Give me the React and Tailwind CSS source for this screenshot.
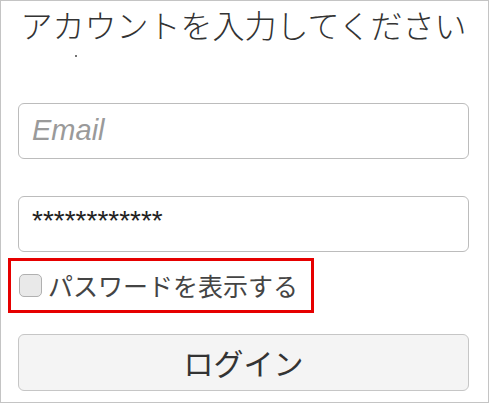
export default function App() {
  return (
    <div className="w-[490px] h-[403px] bg-white">
      <div
        className="w-[489px] h-[403px] border border-[#c4c4c4] pl-[17px] pr-[19px] flex flex-col relative"
        style={{ fontFamily: '"Liberation Sans", "Noto Sans CJK JP", sans-serif' }}
      >
        <h1
          className="text-center text-[32px] leading-[38px] font-light text-[#333] mt-[4px] -mx-[8px] whitespace-nowrap"
          style={{ fontFamily: '"Noto Sans CJK JP", sans-serif' }}
        >
          アカウントを入力してください
        </h1>
        <span className="absolute left-[74px] top-[54px] w-[2px] h-[2px] rounded-full bg-[#444]"></span>
        <div className="mt-[60px] h-[56px] border border-[#bcbcbc] rounded-[6px] flex items-center px-[13px]">
          <input
            className="w-full outline-none bg-transparent text-[29px] italic text-[#333] placeholder:text-[#9a9a9a]"
            style={{ fontFamily: '"Liberation Sans", sans-serif' }}
            placeholder="Email"
          />
        </div>
        <div className="mt-[37px] h-[56px] border border-[#bcbcbc] rounded-[6px] flex items-center px-[13px]">
          <span
            className="text-[28px] text-[#222] leading-none -mt-[6px]"
            style={{ fontFamily: '"Liberation Sans", sans-serif' }}
          >
            ************
          </span>
        </div>
        <label className="mt-[6px] -ml-[10px] w-[306px] h-[55px] border-[3px] border-[#e60000] flex items-center pl-[8px]">
          <span className="w-[23px] h-[23px] rounded-[5px] border border-[#b0b0b0] bg-[#e9e9e9] shrink-0"></span>
          <span
            className="ml-[6px] text-[25px] leading-none text-[#444] whitespace-nowrap"
            style={{ fontFamily: '"Noto Sans CJK JP", sans-serif' }}
          >
            パスワードを表示する
          </span>
        </label>
        <button
          className="mt-[21px] h-[57px] border border-[#c6c6c6] rounded-[6px] bg-[#f4f4f4] text-[30px] text-[#333] flex items-center justify-center"
          style={{ fontFamily: '"Noto Sans CJK JP", sans-serif' }}
        >
          ログイン
        </button>
      </div>
    </div>
  );
}
